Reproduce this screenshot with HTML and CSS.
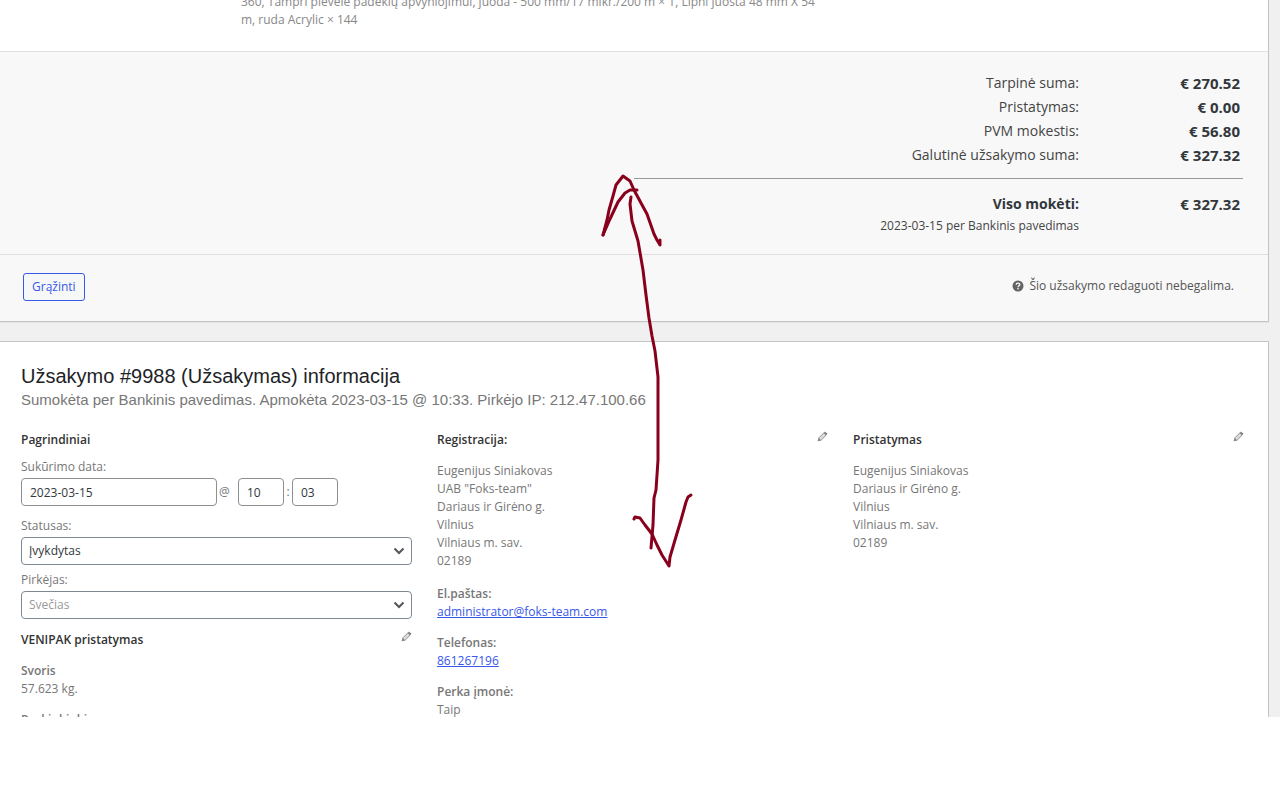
FILE: index.html
```
<!DOCTYPE html>
<html lang="lt">
<head>
  <meta charset="utf-8">
  <title>Užsakymas #9988</title>
  <link rel="stylesheet" href="styles.css">
</head>
<body>
  <div class="screen">
    <section class="panel order-items">
      <div class="item-meta">
        <p>360, Tampri plėvelė padėklų apvyniojimui, juoda - 500 mm/17 mikr./200 m × 1, Lipni juosta 48 mm X 54 m, ruda Acrylic × 144</p>
      </div>
      <div class="totals">
        <table class="totals-table">
          <tr><td class="label">Tarpinė suma:</td><td class="total">€ 270.52</td></tr>
          <tr><td class="label">Pristatymas:</td><td class="total">€ 0.00</td></tr>
          <tr><td class="label">PVM mokestis:</td><td class="total">€ 56.80</td></tr>
          <tr><td class="label">Galutinė užsakymo suma:</td><td class="total">€ 327.32</td></tr>
        </table>
        <table class="totals-table paid">
          <tr><td class="label strong">Viso mokėti:</td><td class="total">€ 327.32</td></tr>
          <tr><td class="label small">2023-03-15 per Bankinis pavedimas</td><td></td></tr>
        </table>
      </div>
      <div class="actions">
        <button type="button" class="refund">Grąžinti</button>
        <span class="notice">
          <svg class="help" viewBox="0 0 12 12" aria-hidden="true">
            <circle cx="6" cy="6" r="5.5" fill="#646464"/>
            <path d="M4.2 4.7C4.2 2.6 7.8 2.6 7.8 4.6C7.8 5.8 6 5.8 6 7.2" fill="none" stroke="#f8f8f8" stroke-width="1.4"/>
            <rect x="5.3" y="8" width="1.4" height="1.4" fill="#f8f8f8"/>
          </svg>
          Šio užsakymo redaguoti nebegalima.
        </span>
      </div>
    </section>

    <section class="panel order-data">
      <h2>Užsakymo #9988 (Užsakymas) informacija</h2>
      <p class="order-meta">Sumokėta per Bankinis pavedimas. Apmokėta 2023-03-15 @ 10:33. Pirkėjo IP: 212.47.100.66</p>

      <div class="columns">
        <div class="column">
          <h3>Pagrindiniai</h3>
          <div class="field first">
            <label for="date">Sukūrimo data:</label>
            <div class="date-row">
              <input type="text" id="date" class="date" value="2023-03-15">
              <span class="at">@</span>
              <input type="text" class="time" aria-label="Valanda" value="10">
              <span class="colon">:</span>
              <input type="text" class="time" aria-label="Minutė" value="03">
            </div>
          </div>
          <div class="field">
            <label for="status">Statusas:</label>
            <div class="select-wrap">
              <select id="status"><option>Įvykdytas</option></select>
              <svg class="chevron" viewBox="0 0 12 8" aria-hidden="true"><path d="M1.5 1.5L6 6L10.5 1.5"/></svg>
            </div>
          </div>
          <div class="field">
            <label for="customer">Pirkėjas:</label>
            <div class="select-wrap">
              <select id="customer" class="guest"><option>Svečias</option></select>
              <svg class="chevron" viewBox="0 0 12 8" aria-hidden="true"><path d="M1.5 1.5L6 6L10.5 1.5"/></svg>
            </div>
          </div>
          <div class="column-head venipak">
            <h3>VENIPAK pristatymas</h3>
            <a href="#" class="edit" aria-label="Redaguoti"><svg viewBox="0 0 12 12"><path class="body" d="M1.3 10.7L2.1 7.4L7.6 1.9L10.1 4.4L4.6 9.9Z"/><path class="tip" d="M7.2 2.3L8.9 .5L11.5 3.1L9.7 4.8ZM.8 11.2L2 7.6L4.4 10Z"/></svg></a>
          </div>
          <p><strong>Svoris</strong><br>57.623 kg.</p>
          <p><strong>Paskinkinki</strong></p>
        </div>

        <div class="column">
          <div class="column-head">
            <h3>Registracija:</h3>
            <a href="#" class="edit" aria-label="Redaguoti"><svg viewBox="0 0 12 12"><path class="body" d="M1.3 10.7L2.1 7.4L7.6 1.9L10.1 4.4L4.6 9.9Z"/><path class="tip" d="M7.2 2.3L8.9 .5L11.5 3.1L9.7 4.8ZM.8 11.2L2 7.6L4.4 10Z"/></svg></a>
          </div>
          <p class="address">Eugenijus Siniakovas<br>UAB "Foks-team"<br>Dariaus ir Girėno g.<br>Vilnius<br>Vilniaus m. sav.<br>02189</p>
          <p><strong>El.paštas:</strong><br><a href="mailto:administrator@foks-team.com">administrator@foks-team.com</a></p>
          <p><strong>Telefonas:</strong><br><a href="tel:861267196">861267196</a></p>
          <p><strong>Perka įmonė:</strong><br>Taip</p>
        </div>

        <div class="column">
          <div class="column-head">
            <h3>Pristatymas</h3>
            <a href="#" class="edit" aria-label="Redaguoti"><svg viewBox="0 0 12 12"><path class="body" d="M1.3 10.7L2.1 7.4L7.6 1.9L10.1 4.4L4.6 9.9Z"/><path class="tip" d="M7.2 2.3L8.9 .5L11.5 3.1L9.7 4.8ZM.8 11.2L2 7.6L4.4 10Z"/></svg></a>
          </div>
          <p class="address">Eugenijus Siniakovas<br>Dariaus ir Girėno g.<br>Vilnius<br>Vilniaus m. sav.<br>02189</p>
        </div>
      </div>
    </section>

    <!-- hand-drawn arrow over both panels -->
    <svg class="arrow" width="110" height="400" viewBox="595 170 110 400" aria-hidden="true">
      <path d="M603 235L607 220L609 210L613 196L616 185L623 176L630 181L634 190L641 203L647 214L654 234L657 240L660 245L660 240"/>
      <path d="M603 235L610 219L618 202L625 193L630 190L637 190"/>
      <path d="M631 197L630 204L632 221L638 241L643 270L646 295L649 318L652 336L655 351L658 377L658 460L656 490L654 498L653 525L651 548"/>
      <path d="M634 519L635 517L640 518L645 525L652 534L657 545L662 555L669 566L670 557L675 540L681 520L686 502L688 497L691 495"/>
    </svg>
  </div>
</body>
</html>
```
FILE: styles.css
```
* {
  box-sizing: border-box;
}

body {
  margin: 0;
  background: #fff;
  color: #777;
  font-family: "Open Sans", "Noto Sans", sans-serif;
  font-size: 12px;
  line-height: 18px;
}

.screen {
  position: relative;
  height: calc(100vh - 76px);
  padding-right: 11px;
  overflow: hidden;
  background: #f0f0f1;
}

.panel {
  background: #fff;
  border: 1px solid #c3c4c7;
  border-left: 0;
  box-shadow: 0 1px 1px rgba(0, 0, 0, 0.04);
}

.order-items {
  margin-bottom: 19px;
  border-top: 0;
}

.item-meta {
  height: 51px;
  padding-left: 241px;
  display: flex;
  align-items: flex-end;
  color: #888;
}

.item-meta p {
  max-width: 584px;
  margin: 0 0 22px;
}

.totals {
  padding: 19px 25px 18px;
  background: #f8f8f8;
  border-top: 1px solid #dfdfdf;
  color: #444;
}

.totals-table {
  width: 50%;
  margin-left: auto;
  border-collapse: collapse;
  font-size: 14px;
  line-height: 24px;
  text-align: right;
}

.totals-table td {
  padding: 0;
}

.totals-table .total {
  width: 164px;
  padding-right: 3px;
  color: #32373c;
  font-size: 15px;
  font-weight: bold;
}

.totals-table .strong {
  color: #32373c;
  font-weight: bold;
}

.totals-table .small {
  font-size: 12px;
  line-height: 20px;
}

.paid {
  margin-top: 11px;
  border-top: 1px solid #999;
  border-collapse: separate;
  border-spacing: 0;
  padding-top: 13px;
}

.actions {
  display: flex;
  align-items: flex-start;
  justify-content: space-between;
  padding: 18px 34px 20px 23px;
  background: #f8f8f8;
  border-top: 1px solid #dfdfdf;
}

.refund {
  height: 28px;
  padding: 0 8px;
  background: #f6f7f7;
  border: 1px solid #3858e9;
  border-radius: 3px;
  color: #3858e9;
  font: inherit;
}

.notice {
  display: flex;
  align-items: center;
  gap: 5px;
  padding-top: 4px;
  color: #555;
}

.help {
  width: 12px;
  height: 12px;
}

.order-data {
  padding: 22px 24px 30px 21px;
}

.order-data h2 {
  margin: 0;
  color: #1d2327;
  font: 20px/24px "Liberation Sans", Arial, sans-serif;
}

.order-meta {
  margin: 0;
  font: 15px/24px "Liberation Sans", Arial, sans-serif;
}

.columns {
  display: grid;
  grid-template-columns: repeat(3, 1fr);
  gap: 25px;
  margin-top: 19px;
}

h3 {
  margin: 0;
  color: #333;
  font-size: 12px;
  font-weight: 600;
  line-height: 18px;
}

.column p {
  margin: 13px 0;
}

.column .address {
  margin-bottom: 15px;
}

strong {
  font-weight: 600;
}

a {
  color: #3858e9;
}

.column-head {
  display: flex;
  align-items: flex-start;
  justify-content: space-between;
}

.edit,
.edit svg {
  display: block;
  width: 11px;
  height: 11px;
}

.edit .body {
  fill: #ddd;
  stroke: #888;
}

.edit .tip {
  fill: #888;
}

.field {
  margin-bottom: 6px;
}

.first {
  margin: 9px 0 11px;
}

.field label {
  display: block;
  height: 20px;
}

.date-row {
  display: flex;
  align-items: center;
  line-height: 26px;
}

input,
select {
  height: 28px;
  padding: 0 8px;
  background: #fff;
  border: 1px solid #8c8f94;
  border-radius: 4px;
  color: #32373c;
  font: inherit;
  line-height: 26px;
}

.date {
  width: 196px;
}

.time {
  width: 46px;
}

.at {
  width: 21px;
  padding-left: 2px;
}

.colon {
  width: 8px;
  text-align: center;
}

.select-wrap {
  position: relative;
}

select {
  display: block;
  width: 100%;
  padding: 0 7px;
  border-color: #7e8993;
  appearance: none;
}

.guest {
  color: #999;
}

.chevron {
  position: absolute;
  top: 10px;
  right: 7px;
  width: 12px;
  height: 8px;
  fill: none;
  stroke: #555;
  stroke-width: 2;
  pointer-events: none;
}

.venipak {
  margin-top: 12px;
}

.arrow {
  position: absolute;
  top: 170px;
  left: 595px;
  fill: none;
  stroke: #88001b;
  stroke-width: 3;
  stroke-linecap: round;
  stroke-linejoin: round;
  pointer-events: none;
}
```
